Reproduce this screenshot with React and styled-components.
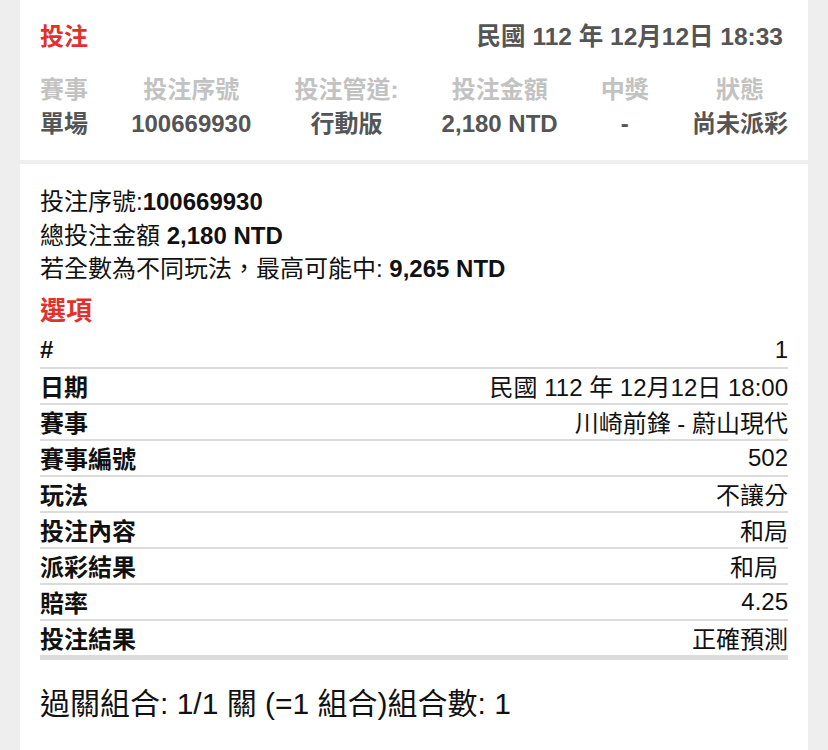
import React from 'react';
import styled, { createGlobalStyle } from 'styled-components';

const GlobalStyle = createGlobalStyle`
  html, body {
    margin: 0;
    padding: 0;
    background-color: #eeeeee;
  }
  body {
    font-family: "Liberation Sans", "Noto Sans CJK TC", sans-serif;
    color: #111;
  }
`;

const Page = styled.div`
  display: flex;
  flex-direction: column;
  gap: 4px;
  width: 828px;
  min-height: 750px;
  padding: 0 20px;
  box-sizing: border-box;
  background-color: #eeeeee;
`;

const Card = styled.section`
  background-color: #fff;
  padding: ${({ compact }) => (compact ? '20px 20px 19px' : '21px 20px 40px')};
  display: flex;
  flex-direction: column;
`;

const TitleRow = styled.div`
  display: flex;
  justify-content: space-between;
  align-items: center;
  height: 34px;
  margin-bottom: 19px;
`;

const Red = styled.h2`
  margin: 0;
  color: #e2302a;
  font-weight: 700;
  font-size: ${({ big }) => (big ? '26px' : '24px')};
  line-height: ${({ big }) => (big ? '40px' : '34px')};
  margin-top: ${({ big }) => (big ? '5px' : '0')};
`;

const Stamp = styled.span`
  color: #555;
  font-weight: 700;
  font-size: 24.5px;
  line-height: 34px;
  margin-right: 5px;
`;

const Summary = styled.div`
  display: flex;
  justify-content: space-between;
`;

const Column = styled.div`
  display: flex;
  flex-direction: column;
  align-items: center;
  font-size: 24px;
  font-weight: 700;
  line-height: 34px;
`;

const Head = styled.span`
  color: #c2c2c2;
`;

const Value = styled.span`
  color: #555;
`;

const Line = styled.div`
  font-size: 24px;
  line-height: 33.5px;
  color: #111;

  b {
    font-weight: 700;
  }
`;

const Table = styled.div`
  display: flex;
  flex-direction: column;
  margin-top: 2px;
  border-bottom: 5px solid #dcdcdc;
`;

const Row = styled.div`
  display: flex;
  justify-content: space-between;
  align-items: center;
  height: 34px;
  font-size: 24px;
  border-bottom: ${({ last }) => (last ? 'none' : '2px solid #dcdcdc')};
`;

const Label = styled.span`
  font-weight: 700;
`;

const Cell = styled.span`
  padding-right: ${({ inset }) => (inset ? '10px' : '0')};
`;

const Footer = styled.div`
  margin-top: 24px;
  font-size: 30px;
  line-height: 40px;
  color: #111;
`;

const summary = [
  ['賽事', '單場'],
  ['投注序號', '100669930'],
  ['投注管道:', '行動版'],
  ['投注金額', '2,180 NTD'],
  ['中獎', '-'],
  ['狀態', '尚未派彩'],
];

const options = [
  { label: '#', value: '1' },
  { label: '日期', value: '民國 112 年 12月12日 18:00' },
  { label: '賽事', value: '川崎前鋒 - 蔚山現代' },
  { label: '賽事編號', value: '502' },
  { label: '玩法', value: '不讓分' },
  { label: '投注內容', value: '和局' },
  { label: '派彩結果', value: '和局', inset: true },
  { label: '賠率', value: '4.25' },
  { label: '投注結果', value: '正確預測' },
];

const App = () => (
  <>
    <GlobalStyle />
    <Page>
      <Card compact>
        <TitleRow>
          <Red>投注</Red>
          <Stamp>民國 112 年 12月12日 18:33</Stamp>
        </TitleRow>
        <Summary>
          {summary.map(([head, value]) => (
            <Column key={head}>
              <Head>{head}</Head>
              <Value>{value}</Value>
            </Column>
          ))}
        </Summary>
      </Card>
      <Card>
        <Line>
          投注序號:<b>100669930</b>
        </Line>
        <Line>
          總投注金額 <b>2,180 NTD</b>
        </Line>
        <Line>
          若全數為不同玩法，最高可能中: <b>9,265 NTD</b>
        </Line>
        <Red big>選項</Red>
        <Table>
          {options.map((o, i) => (
            <Row key={o.label} last={i === options.length - 1}>
              <Label>{o.label}</Label>
              <Cell inset={o.inset}>{o.value}</Cell>
            </Row>
          ))}
        </Table>
        <Footer>過關組合: 1/1 關 (=1 組合)組合數: 1</Footer>
      </Card>
    </Page>
  </>
);

export default App;
